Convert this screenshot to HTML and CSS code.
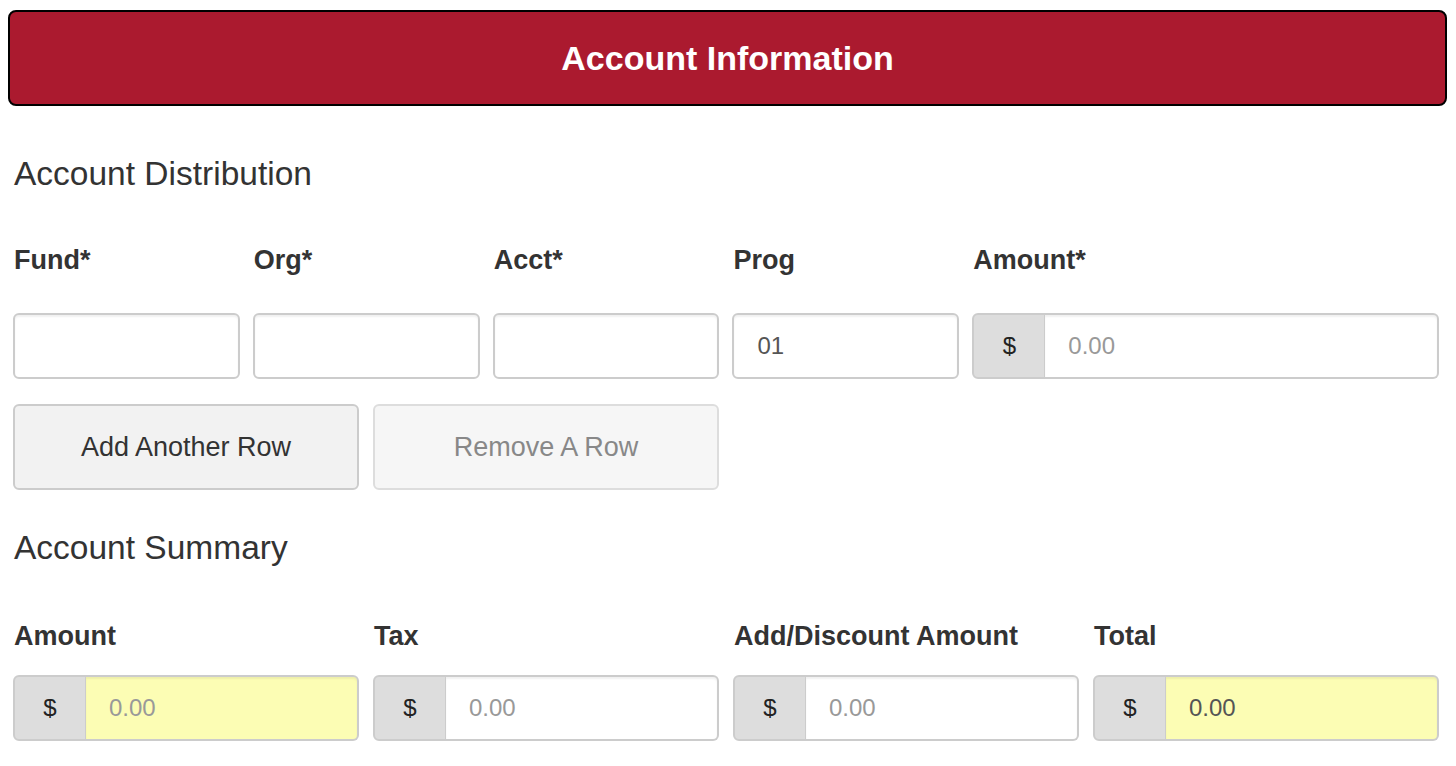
FILE: index.html
```html
<!DOCTYPE html>
<html lang="en">
  <head>
    <meta charset="UTF-8" />
    <meta name="viewport" content="width=device-width, initial-scale=1.0" />
    <title>Account Information</title>
    <link rel="stylesheet" href="styles.css">
  </head>
  <body>
    <div class="panel-heading">Account Information</div>
    <div class="content">
      <h3>Account Distribution</h3>
      <div class="dist-grid">
        <label class="field-label">Fund*</label>
        <label class="field-label">Org*</label>
        <label class="field-label">Acct*</label>
        <label class="field-label">Prog</label>
        <label class="field-label span-2">Amount*</label>

        <input type="text" class="form-control" />
        <input type="text" class="form-control" />
        <input type="text" class="form-control" />
        <input type="text" class="form-control" value="01" />
        <div class="input-group span-2">
          <span class="addon">$</span>
          <input type="text" class="form-control" placeholder="0.00" />
        </div>
      </div>

      <div class="btn-grid">
        <button class="btn">Add Another Row</button>
        <button class="btn" disabled>Remove A Row</button>
      </div>

      <h3 class="summary-title">Account Summary</h3>
      <div class="summary-grid">
        <label class="field-label">Amount</label>
        <label class="field-label">Tax</label>
        <label class="field-label">Add/Discount Amount</label>
        <label class="field-label">Total</label>

        <div class="input-group">
          <span class="addon">$</span>
          <input type="text" class="form-control readonly" placeholder="0.00" />
        </div>
        <div class="input-group">
          <span class="addon">$</span>
          <input type="text" class="form-control" placeholder="0.00" />
        </div>
        <div class="input-group">
          <span class="addon">$</span>
          <input type="text" class="form-control" placeholder="0.00" />
        </div>
        <div class="input-group">
          <span class="addon">$</span>
          <input type="text" class="form-control readonly" value="0.00" />
        </div>
      </div>
    </div>
  </body>
</html>
```

FILE: styles.css
```css
body {
  margin: 0;
  font-family: "Liberation Sans", Arial, sans-serif;
  color: #333;
  background: #fff;
}
.panel-heading {
  margin: 10px 9px 0 8px;
  height: 92px;
  border: 2px solid #000;
  border-radius: 8px;
  background-color: #ab1a2f;
  color: #fff;
  font-size: 34px;
  font-weight: bold;
  display: flex;
  align-items: center;
  justify-content: center;
}
.content {
  padding: 0 17px 0 13px;
}
h3 {
  margin: 48px 0 0 1px;
  font-size: 33.5px;
  line-height: 40px;
  font-weight: normal;
}
.summary-title {
  margin-top: 38px;
}
.dist-grid {
  display: grid;
  grid-template-columns: repeat(6, 1fr);
  column-gap: 13px;
  margin-top: 51px;
}
.summary-grid {
  display: grid;
  grid-template-columns: repeat(4, 1fr);
  column-gap: 14px;
  margin-top: 53px;
}
.span-2 {
  grid-column: span 2;
}
.field-label {
  font-size: 27px;
  line-height: 30px;
  font-weight: bold;
  padding-left: 1px;
  margin-bottom: 38px;
}
.summary-grid .field-label {
  margin-bottom: 24px;
}
.form-control {
  box-sizing: border-box;
  width: 100%;
  height: 66px;
  padding: 0 23px;
  border: 2px solid #ccc;
  border-radius: 6px;
  font-family: inherit;
  font-size: 24px;
  color: #555;
  background: #fff;
  box-shadow: inset 0 2px 2px rgba(0, 0, 0, 0.06);
}
.form-control::placeholder {
  color: #999;
}
.form-control.readonly {
  background: #fcfdb4;
}
.input-group {
  display: flex;
}
.input-group .form-control {
  flex: 1;
  min-width: 0;
  border-top-left-radius: 0;
  border-bottom-left-radius: 0;
  border-left: 0;
}
.addon {
  box-sizing: border-box;
  width: 73px;
  height: 66px;
  flex: none;
  display: flex;
  align-items: center;
  justify-content: center;
  background: #ddd;
  border: 2px solid #ccc;
  border-right-width: 1px;
  border-radius: 6px 0 0 6px;
  font-size: 24px;
  color: #222;
}
.btn-grid {
  display: grid;
  grid-template-columns: repeat(4, 1fr);
  column-gap: 14px;
  margin-top: 25px;
}
.btn {
  height: 86px;
  border: 2px solid #ccc;
  border-radius: 6px;
  background: #f2f2f2;
  font-family: inherit;
  font-size: 27px;
  color: #333;
}
.btn:disabled {
  background: #f6f6f6;
  border-color: #ddd;
  color: #888;
}
```
